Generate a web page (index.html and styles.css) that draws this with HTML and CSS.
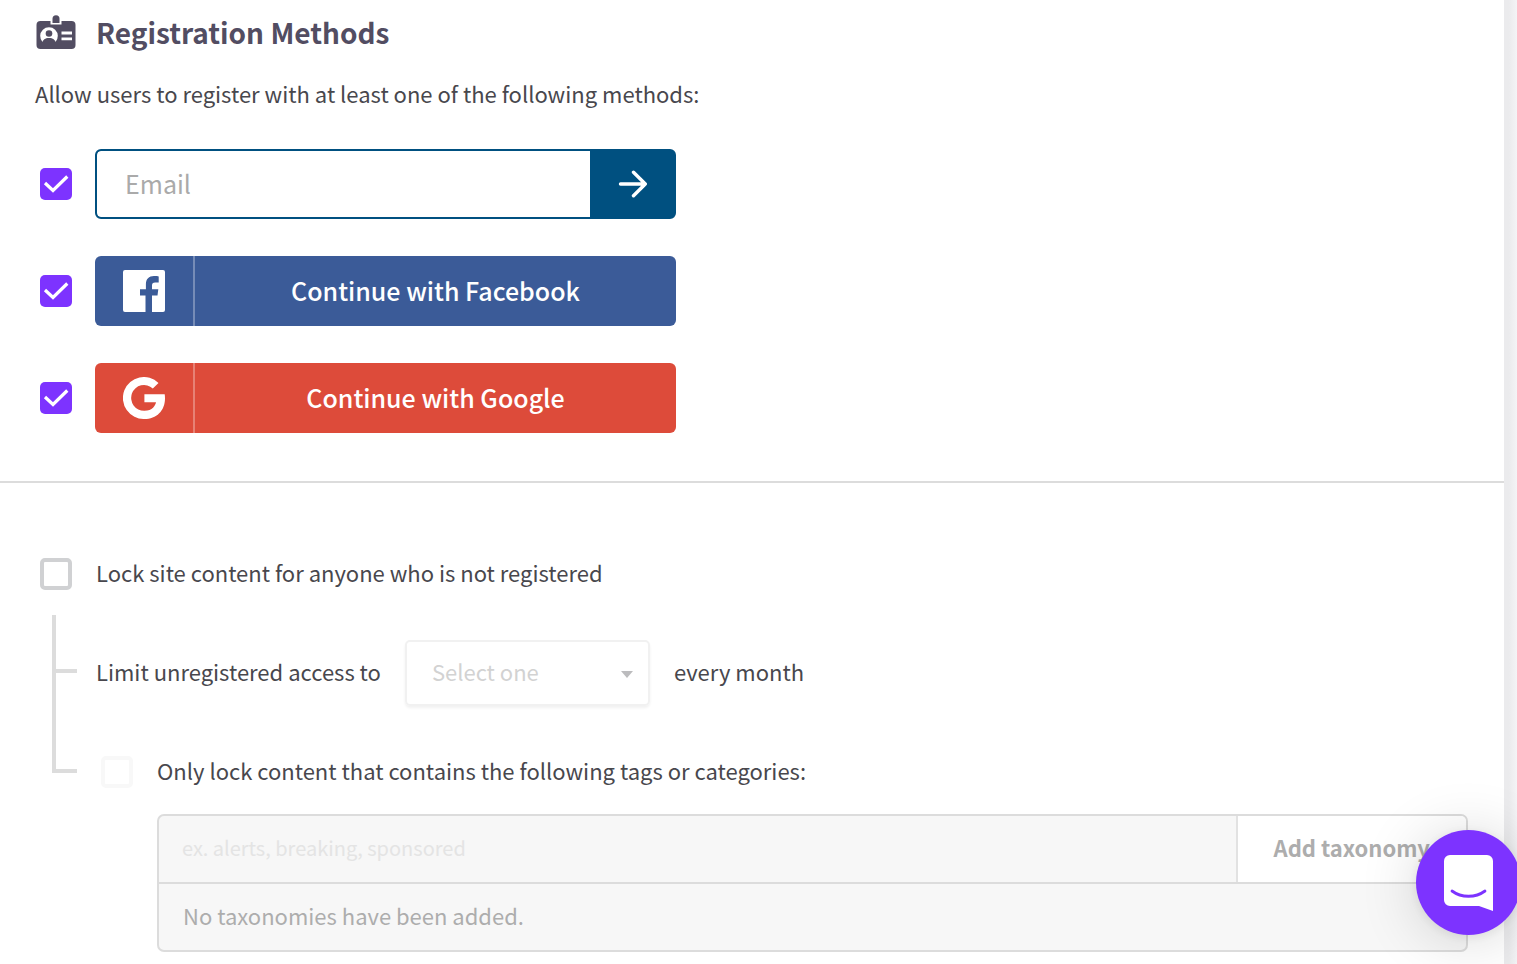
FILE: index.html
```html
<!DOCTYPE html>
<html lang="en">
<head>
    <meta charset="UTF-8">
    <meta name="viewport" content="width=device-width, initial-scale=1.0">
    <title>Registration Methods</title>
    <link rel="stylesheet" href="styles.css">
</head>
<body>

    <main class="panel">
        <section class="methods">
            <h1 class="title">
                <svg class="title-icon" viewBox="0 0 40 36" width="40" height="36" aria-hidden="true">
                    <rect x="0.500" y="7" width="39" height="28" rx="4" fill="#524d62"/>
                    <path d="M14.500 6h11v4.500h-11z" fill="#fff"/>
                    <path d="M16.500 9V4.800a3.500 3.500 0 0 1 7 0V9z" fill="#524d62"/>
                    <path d="M6.500 28A8.800 8.800 0 1 1 19.500 28z" fill="#fff"/>
                    <circle cx="13" cy="19.500" r="3.300" fill="#524d62"/>
                    <path d="M6 29c1-3.500 3-5 7-5s6 1.500 7 5z" fill="#524d62"/>
                    <path d="M25.500 19h10.500M25.500 24.800h10.500" stroke="#fff" stroke-width="2.800"/>
                </svg>
                Registration Methods
            </h1>
            <p class="intro">Allow users to register with at least one of the following methods:</p>

            <div class="method">
                <input class="check" type="checkbox" aria-label="Email registration" checked>
                <form class="email-form">
                    <input class="email-input" type="email" placeholder="Email" aria-label="Email">
                    <button class="email-submit" type="button" aria-label="Continue with email">
                        <svg viewBox="0 0 30 28" width="30" height="28" aria-hidden="true">
                            <path d="M3.500 14H28.300M16.500 2.300L28.300 14 16.500 25.700" fill="none" stroke="#fff" stroke-width="3.400" stroke-linecap="round" stroke-linejoin="round"/>
                        </svg>
                    </button>
                </form>
            </div>

            <div class="method">
                <input class="check" type="checkbox" aria-label="Facebook registration" checked>
                <button class="social facebook" type="button">
                    <span class="social-icon">
                        <svg viewBox="0 0 42 42" width="42" height="42" aria-hidden="true">
                            <path d="M2 0h38a2 2 0 0 1 2 2v38a2 2 0 0 1-2 2H29V25.500h5.500l.8-6.300H29v-3.500c0-2 .8-3.200 3.200-3.200h3.500V6.400c-.7-.1-2.600-.3-4.800-.3-4.900 0-8 2.900-8 8.300v4.800H17v6.300h5.500V42H2a2 2 0 0 1-2-2V2a2 2 0 0 1 2-2z" fill="#fff"/>
                        </svg>
                    </span>
                    <span class="social-label">Continue with Facebook</span>
                </button>
            </div>

            <div class="method">
                <input class="check" type="checkbox" aria-label="Google registration" checked>
                <button class="social google" type="button">
                    <span class="social-icon">
                        <svg viewBox="0 0 42 42" width="42" height="42" aria-hidden="true">
                            <path d="M21.400 17.200v8H33c-.5 3-3.500 8.600-11.600 8.600A12.900 12.900 0 1 1 29.800 11.400l5.700-5.500A21 21 0 1 0 21.400 42C33.500 42 42 33.500 42 21.400c0-1.600-.1-2.900-.3-4.200z" fill="#fff"/>
                        </svg>
                    </span>
                    <span class="social-label">Continue with Google</span>
                </button>
            </div>
        </section>

        <section class="locking">
            <div class="option">
                <input class="check" type="checkbox" id="lock-site">
                <label class="text" for="lock-site">Lock site content for anyone who is not registered</label>
            </div>

            <div class="sub-options">
                <div class="branches">
                    <div class="branch branch-limit"></div>
                    <div class="branch branch-tags"></div>
                </div>
                <div class="sub-content">
                    <div class="limit">
                        <label class="text" for="limit">Limit unregistered access to</label>
                        <div class="select-wrap">
                            <select id="limit" disabled>
                                <option>Select one</option>
                            </select>
                        </div>
                        <span class="text">every month</span>
                    </div>

                    <div class="option option-tags">
                        <input class="check" type="checkbox" id="lock-tags" disabled>
                        <label class="text" for="lock-tags">Only lock content that contains the following tags or categories:</label>
                    </div>

                    <div class="taxonomies">
                        <div class="taxonomy-add">
                            <input class="taxonomy-input" type="text" placeholder="ex. alerts, breaking, sponsored" aria-label="Taxonomy" disabled>
                            <button class="taxonomy-button" type="button" disabled>Add taxonomy</button>
                        </div>
                        <p class="taxonomy-empty">No taxonomies have been added.</p>
                    </div>
                </div>
            </div>
        </section>
    </main>

    <button class="chat" type="button" aria-label="Open chat">
        <svg viewBox="0 0 50 56" width="50" height="56" aria-hidden="true">
            <path d="M6 0h37a6 6 0 0 1 6 6v50l-14-5H6a6 6 0 0 1-6-6V6a6 6 0 0 1 6-6z" fill="#fff"/>
            <path d="M8 36c9.500 7 23.500 7 33 0" fill="none" stroke="#7d33ff" stroke-width="2.800" stroke-linecap="round"/>
        </svg>
    </button>

</body>
</html>
```

FILE: styles.css
```css
* {
    box-sizing: border-box;
}
body {
    margin: 0;
    font-family: "Noto Sans CJK SC", "Open Sans", sans-serif;
    font-size: 22px;
    line-height: 32px;
    color: #48474d;
    background: linear-gradient(to left, #f4f4f6, #ebebed 8px);
}
h1, p {
    margin: 0;
}
button, input, select {
    font: inherit;
}
.panel {
    min-height: 100vh;
    margin-right: 13px;
    background-color: #fff;
}
.methods {
    padding: 13px 35px 48px;
    border-bottom: 2px solid #dcdcdc;
}
.title {
    display: flex;
    align-items: center;
    gap: 20px;
    height: 38px;
    font-size: 28px;
    font-weight: 600;
    color: #524d62;
}
.title-icon {
    margin-left: 1px;
}
.intro {
    margin: 26px 0 40px;
}
.method {
    display: flex;
    align-items: center;
    gap: 23px;
    max-width: 641px;
    padding-left: 5px;
}
.method + .method {
    margin-top: 37px;
}

/* checkboxes */
.check {
    appearance: none;
    flex: none;
    width: 32px;
    height: 32px;
    margin: 0;
    border: 4px solid #d0d1d3;
    border-radius: 5px;
    background-color: #fff;
}
.check:checked {
    border: none;
    background: #7d33ff url("data:image/svg+xml,%3Csvg xmlns='http://www.w3.org/2000/svg' viewBox='0 0 32 32'%3E%3Cpath d='M5 15l8 7.500L27.300 8.500' fill='none' stroke='%23fff' stroke-width='3.200'/%3E%3C/svg%3E");
}
.check:disabled {
    border-color: #f8f8f8;
}

/* registration buttons */
.email-form {
    display: flex;
    flex: 1;
    height: 70px;
    border: 2px solid #005080;
    border-radius: 6px;
    background-color: #005080;
    overflow: hidden;
}
.email-input {
    flex: 1;
    min-width: 0;
    padding: 0 28px 2px;
    border: none;
    border-radius: 4px 0 0 4px;
    font-size: 25px;
    background-color: #fff;
}
.email-input::placeholder {
    color: #aaa;
}
.email-submit {
    display: flex;
    align-items: center;
    justify-content: center;
    width: 84px;
    padding: 0;
    border: none;
    background-color: #005080;
}
.social {
    display: flex;
    align-items: center;
    flex: 1;
    height: 70px;
    padding: 0;
    border: none;
    border-radius: 6px;
    font-size: 25px;
    font-weight: 500;
    color: #fff;
}
.facebook {
    background-color: #3b5b98;
}
.google {
    background-color: #dd4b3a;
}
.social-icon {
    display: flex;
    align-items: center;
    justify-content: center;
    width: 100px;
    height: 100%;
    border-right: 2px solid rgba(255, 255, 255, 0.3);
}
.social-label {
    flex: 1;
    padding-bottom: 2px;
}

/* content locking */
.locking {
    padding: 75px 36px 12px 40px;
}
.option {
    display: flex;
    align-items: center;
    gap: 24px;
    height: 32px;
}
.text {
    padding-bottom: 4px;
}
.sub-options {
    display: flex;
    gap: 19px;
    margin-top: 25px;
    padding-left: 12px;
}
.branches {
    flex: none;
    width: 25px;
}
.branch {
    border: solid #dcdcdc;
    border-width: 0 0 4px 4px;
}
.branch-limit {
    height: 58px;
}
.branch-tags {
    height: 100px;
}
.sub-content {
    flex: 1;
    padding-top: 25px;
}
.limit {
    display: flex;
    align-items: center;
    gap: 24px;
}
.select-wrap {
    display: flex;
    align-items: center;
    width: 245px;
    height: 66px;
    border: 2px solid #f1f1f1;
    border-radius: 5px;
    box-shadow: 0 2px 3px rgba(0, 0, 0, 0.06);
}
.select-wrap select {
    appearance: none;
    width: 100%;
    height: 100%;
    padding: 0 25px 4px;
    border: none;
    color: #d2d2d2;
    opacity: 1;
    background: none;
}
.select-wrap::after {
    content: "";
    flex: none;
    margin: 2px 15px 0 -27px;
    border: solid transparent;
    border-width: 7px 6px 0;
    border-top-color: #bcbcbe;
}
.option-tags {
    margin-top: 50px;
    padding-left: 5px;
}
.taxonomies {
    margin: 26px 0 0 61px;
    border: 2px solid #dcdcdc;
    border-radius: 7px;
    background-color: #f7f7f7;
}
.taxonomy-add {
    display: flex;
    height: 68px;
    border-bottom: 2px solid #dcdcdc;
}
.taxonomy-input {
    flex: 1;
    min-width: 0;
    padding: 0 23px 2px;
    border: none;
    font-size: 20px;
    background: none;
}
.taxonomy-input::placeholder {
    color: #e4e4e4;
}
.taxonomy-button {
    padding: 0 36px 4px;
    border: none;
    border-left: 2px solid #e2e2e2;
    border-radius: 0 5px 0 0;
    font-weight: 600;
    color: #adadad;
    background-color: #fff;
}
.taxonomy-empty {
    padding: 15px 24px 19px;
    color: #adadad;
}

/* chat launcher */
.chat {
    position: fixed;
    right: -4px;
    bottom: 29px;
    display: flex;
    align-items: center;
    justify-content: center;
    width: 105px;
    height: 105px;
    padding: 0;
    border: none;
    border-radius: 50%;
    background-color: #7d33ff;
    box-shadow: 0 2px 12px rgba(0, 0, 0, 0.08), 0 4px 60px rgba(0, 0, 0, 0.16);
}
```
